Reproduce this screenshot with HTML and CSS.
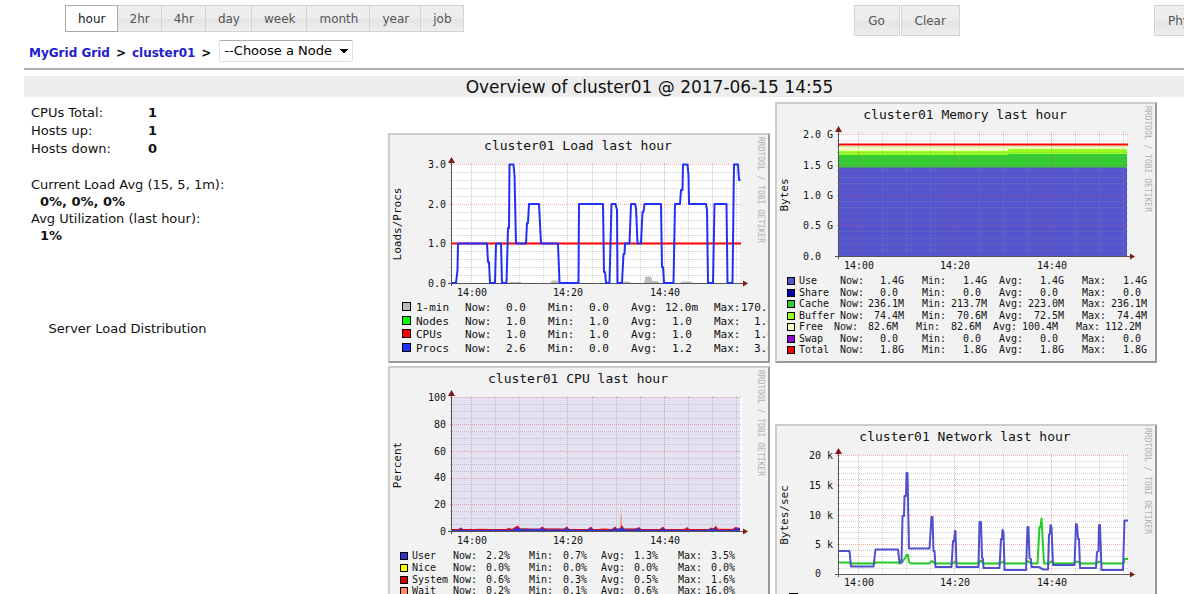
FILE: index.html
```html
<!DOCTYPE html>
<html lang="en">
<head>
<meta charset="utf-8">
<title>cluster01 overview</title>
<link rel="stylesheet" href="styles.css">
</head>
<body>
<header class="toolbar">
  <div class="tabs">
    <button type="button" class="tab active">hour</button>
    <button type="button" class="tab">2hr</button>
    <button type="button" class="tab">4hr</button>
    <button type="button" class="tab">day</button>
    <button type="button" class="tab">week</button>
    <button type="button" class="tab">month</button>
    <button type="button" class="tab">year</button>
    <button type="button" class="tab">job</button>
  </div>
  <div class="actions">
    <button type="button" class="btn">Go</button>
    <button type="button" class="btn">Clear</button>
  </div>
  <button type="button" class="btn">Physical View</button>
</header>
<nav class="crumbs">
  <a href="#">MyGrid Grid</a><span>&gt;</span><a href="#">cluster01</a><span>&gt;</span>
  <select class="node" aria-label="Node"><option>--Choose a Node</option></select>
</nav>
<main class="page">
  <h1 class="title">Overview of cluster01 @ 2017-06-15 14:55</h1>
  <div class="content">
    <section class="summary">
      <dl class="counts">
        <dt>CPUs Total:</dt><dd>1</dd>
        <dt>Hosts up:</dt><dd>1</dd>
        <dt>Hosts down:</dt><dd>0</dd>
      </dl>
      <dl class="loads">
        <dt>Current Load Avg (15, 5, 1m):</dt><dd>0%, 0%, 0%</dd>
        <dt>Avg Utilization (last hour):</dt><dd>1%</dd>
      </dl>
      <p class="distribution">Server Load Distribution</p>
    </section>
    <section class="charts">
      <div class="chart">
        <svg width="378" height="226" role="img" aria-label="cluster01 Load last hour">
          <rect class="canvas" x="62" y="29" width="288" height="119"/>
          <path class="minor" d="M60 140.5H352M60 132.5H352M60 124.5H352M60 116.5H352M60 100.5H352M60 93.5H352M60 85.5H352M60 77.5H352M60 61.5H352M60 53.5H352M60 45.5H352M60 37.5H352M105.5 28V150M129.5 28V150M153.5 28V150M202.5 28V150M226.5 28V150M250.5 28V150M298.5 28V150M322.5 28V150M346.5 28V150"/>
          <path class="major" d="M60 108.5H352M60 69.5H352M60 29.5H352M81.5 28V150M177.5 28V150M274.5 28V150"/>
          <path fill="#bbb" d="M119 148V147H131V148ZM160 148L162 145.500H167L169 148ZM232 148L234 146.500H239L242 148ZM254 148L255.500 141.500H261L262.500 146H267L270 148ZM290 148L292 146.500H300L304 148Z"/>
          <path class="axis" d="M58 148.500H356M61.500 26V151"/>
          <path class="arrow" d="M61.500 22L65 28H58ZM358 148.500L353 145.500V151.500Z"/>
          <path class="line" stroke="#f00" d="M62 108.500H351"/>
          <path class="line" stroke="#2030f4" d="M62 148H66L67.500 135 68 108.500H97L98 127H99L100 148H105L106 108.500H111L112 148H116.500L118 93H119L119.500 29.500H123.500L124.500 40 126 108.500H136L137 88H138L139 69H149L151 108.500H168L169.500 148H188.500L189 69H213L214 137H215L216 148H219.500L221.500 69H225.500L227 75 227.500 148H232L233.500 119H234.500L235 108.500H239.500L241 69H245L246 73 247.500 108.500H251L252.500 77H253.500L254.500 69H271L272 132H273L274 148H283.500L285 69H290L291 55H292.500L293 29.500H297.500L298.500 40 299 69H316L317 75 318 148H323L324.500 69H336.500L337.500 148H342.500L344 29.500H348L349 45H350.500"/>
          <text class="name" x="188" y="15">cluster01 Load last hour</text>
          <text class="unit" transform="translate(11 89) rotate(-90)">Loads/Procs</text>
          <text class="mark" transform="translate(368 2) rotate(90)">RRDTOOL / TOBI OETIKER</text>
          <g class="end"><text x="56" y="33">3.0</text><text x="56" y="73">2.0</text><text x="56" y="112">1.0</text><text x="56" y="152">0.0</text></g>
          <g class="mid"><text x="82" y="161">14:00</text><text x="178" y="161">14:20</text><text x="275" y="161">14:40</text></g>
          <g class="swatch">
            <rect x="12.5" y="167.500" width="8" height="8" fill="#bbb"/><rect x="12.5" y="181.500" width="8" height="8" fill="#0f0"/><rect x="12.5" y="194.500" width="8" height="8" fill="#f00"/><rect x="12.5" y="208.500" width="8" height="8" fill="#2030f4"/>
          </g>
          <g class="big">
            <text y="176"><tspan x="26">1-min</tspan><tspan x="75">Now:</tspan><tspan x="116">0.0</tspan><tspan x="158">Min:</tspan><tspan x="199">0.0</tspan><tspan x="241">Avg:</tspan><tspan x="275">12.0m</tspan><tspan x="324">Max:</tspan><tspan x="351">170.0m</tspan></text>
            <text y="190"><tspan x="26">Nodes</tspan><tspan x="75">Now:</tspan><tspan x="116">1.0</tspan><tspan x="158">Min:</tspan><tspan x="199">1.0</tspan><tspan x="241">Avg:</tspan><tspan x="282">1.0</tspan><tspan x="324">Max:</tspan><tspan x="364">1.0</tspan></text>
            <text y="203"><tspan x="26">CPUs</tspan><tspan x="75">Now:</tspan><tspan x="116">1.0</tspan><tspan x="158">Min:</tspan><tspan x="199">1.0</tspan><tspan x="241">Avg:</tspan><tspan x="282">1.0</tspan><tspan x="324">Max:</tspan><tspan x="364">1.0</tspan></text>
            <text y="217"><tspan x="26">Procs</tspan><tspan x="75">Now:</tspan><tspan x="116">2.6</tspan><tspan x="158">Min:</tspan><tspan x="199">0.0</tspan><tspan x="241">Avg:</tspan><tspan x="282">1.2</tspan><tspan x="324">Max:</tspan><tspan x="364">3.0</tspan></text>
          </g>
        </svg>
      </div>
      <div class="chart">
        <svg width="378" height="257" role="img" aria-label="cluster01 Memory last hour">
          <rect class="canvas" x="62" y="30" width="288" height="122"/>
          <path fill="#f0ffbe" d="M62 41H350V48H62Z"/>
          <path fill="#9f2" d="M62 47H230L232 45H350V52H62Z"/>
          <path fill="#3c3" d="M62 51H230L232 50H350V64H62Z"/>
          <path fill="#5555cf" d="M62 63.500H350V152H62Z"/>
          <path class="minor" d="M60 146.500H352M60 140.500H352M60 134.500H352M60 127.500H352M60 115.500H352M60 109.500H352M60 103.500H352M60 97.500H352M60 85.500H352M60 79.500H352M60 73.500H352M60 66.500H352M60 54.500H352M60 48.500H352M60 42.500H352M60 36.500H352M105.500 28V154M129.500 28V154M153.500 28V154M202.500 28V154M226.500 28V154M250.500 28V154M298.500 28V154M322.500 28V154M346.500 28V154"/>
          <path class="major" d="M60 121.500H352M60 91.500H352M60 61.500H352M60 30.500H352M81.500 28V154M177.500 28V154M274.500 28V154"/>
          <path class="line" stroke="#f00" d="M62 40.500H351"/>
          <path class="axis" d="M58 152.500H356M61.500 26V155"/>
          <path class="arrow" d="M61.500 22L65 28H58ZM358 152.500L353 149.500V155.500Z"/>
          <text class="name" x="188" y="15">cluster01 Memory last hour</text>
          <text class="unit" transform="translate(11 91) rotate(-90)">Bytes</text>
          <text class="mark" transform="translate(368 2) rotate(90)">RRDTOOL / TOBI OETIKER</text>
          <g class="end"><text x="56" y="34">2.0 G</text><text x="56" y="65">1.5 G</text><text x="56" y="95">1.0 G</text><text x="56" y="125">0.5 G</text><text x="44" y="156">0.0</text></g>
          <g class="mid"><text x="82" y="165">14:00</text><text x="178" y="165">14:20</text><text x="275" y="165">14:40</text></g>
          <g class="swatch">
            <rect x="10.500" y="173.500" width="7" height="7" fill="#5555cf"/><rect x="10.500" y="185.500" width="7" height="7" fill="#0000a8"/><rect x="10.500" y="196.500" width="7" height="7" fill="#3c3"/><rect x="10.500" y="208.500" width="7" height="7" fill="#9f2"/><rect x="10.500" y="219.500" width="7" height="7" fill="#f0ffbe"/><rect x="10.500" y="231.500" width="7" height="7" fill="#9400d3"/><rect x="10.500" y="242.500" width="7" height="7" fill="#f00"/>
          </g>
          <g>
            <text x="22" y="180">Use</text><text x="22" y="192">Share</text><text x="22" y="203">Cache</text><text x="22" y="215">Buffer</text><text x="22" y="226">Free</text><text x="22" y="238">Swap</text><text x="22" y="249">Total</text>
          </g>
          <g class="end">
            <text y="180"><tspan x="87">Now:</tspan><tspan x="127">1.4G</tspan><tspan x="169">Min:</tspan><tspan x="210">1.4G</tspan><tspan x="246">Avg:</tspan><tspan x="287">1.4G</tspan><tspan x="329">Max:</tspan><tspan x="370">1.4G</tspan></text>
            <text y="192"><tspan x="87">Now:</tspan><tspan x="121">0.0</tspan><tspan x="169">Min:</tspan><tspan x="204">0.0</tspan><tspan x="246">Avg:</tspan><tspan x="281">0.0</tspan><tspan x="329">Max:</tspan><tspan x="364">0.0</tspan></text>
            <text y="203"><tspan x="87">Now:</tspan><tspan x="127">236.1M</tspan><tspan x="169">Min:</tspan><tspan x="210">213.7M</tspan><tspan x="246">Avg:</tspan><tspan x="287">223.0M</tspan><tspan x="329">Max:</tspan><tspan x="370">236.1M</tspan></text>
            <text y="215"><tspan x="87">Now:</tspan><tspan x="127">74.4M</tspan><tspan x="169">Min:</tspan><tspan x="210">70.6M</tspan><tspan x="246">Avg:</tspan><tspan x="287">72.5M</tspan><tspan x="329">Max:</tspan><tspan x="370">74.4M</tspan></text>
            <text y="226"><tspan x="81">Now:</tspan><tspan x="121">82.6M</tspan><tspan x="163">Min:</tspan><tspan x="204">82.6M</tspan><tspan x="240">Avg:</tspan><tspan x="281">100.4M</tspan><tspan x="323">Max:</tspan><tspan x="364">112.2M</tspan></text>
            <text y="238"><tspan x="87">Now:</tspan><tspan x="121">0.0</tspan><tspan x="169">Min:</tspan><tspan x="204">0.0</tspan><tspan x="246">Avg:</tspan><tspan x="281">0.0</tspan><tspan x="329">Max:</tspan><tspan x="364">0.0</tspan></text>
            <text y="249"><tspan x="87">Now:</tspan><tspan x="127">1.8G</tspan><tspan x="169">Min:</tspan><tspan x="210">1.8G</tspan><tspan x="246">Avg:</tspan><tspan x="287">1.8G</tspan><tspan x="329">Max:</tspan><tspan x="370">1.8G</tspan></text>
          </g>
        </svg>
      </div>
      <div class="chart">
        <svg width="378" height="257" role="img" aria-label="cluster01 CPU last hour">
          <rect class="canvas" x="62" y="29" width="290" height="134"/>
          <rect fill="#e2e2f2" x="62" y="29" width="288" height="134"/>
          <path class="minor" d="M60 156.500H352M60 150.500H352M60 143.500H352M60 130.500H352M60 123.500H352M60 116.500H352M60 103.500H352M60 96.500H352M60 90.500H352M60 76.500H352M60 70.500H352M60 63.500H352M60 50.500H352M60 43.500H352M60 36.500H352M105.500 28V165M129.500 28V165M153.500 28V165M202.500 28V165M226.500 28V165M250.500 28V165M298.500 28V165M322.500 28V165M346.500 28V165"/>
          <path class="major" d="M60 136.500H352M60 110.500H352M60 83.500H352M60 56.500H352M60 29.500H352M81.500 28V165M177.500 28V165M274.500 28V165"/>
          <path fill="#ff8a60" d="M62 163V161.500H85L88 160.500H96L99 161.500H116L119 159.500 122 161 128 158.500 130 160H137L141 161H150L152 159.500 155 160.500H168L170 161.500H174L177 159.500 180 161.500H197L201 159.500 204 161.500H208L211 160H216L219 161H222L225 159 228 160.500H230L231 140 232 158 234 160.500H245L249 159.500 252 161H270L273 159 276 161H293L297 159.500 301 161H319L322 159.500 324 160.500 326 157.500 328 160.500H342L345 159.500 350 160V163Z"/>
          <path fill="#c8102e" d="M62 163V161H68L71 159.500 73 161H116L119 160 122 161 124 159.500 128 157.500 130 160.500H150L152 158.500 155 160.500H174L177 158.500 179 161H198L201 158.500 203 161H222L225 158.500 227 160.500H230L232 157 234 160.500H246L249 159 251 161H270L273 158.500 275 161H295L297 159 299 161H319L321 159.500 323 160.500 326 158 328 161H343L345 159 350 160V163Z"/>
          <path fill="#3333cd" d="M62 163V162H69L71 160.500 73 162H122L128 159.500 131 161H150L152 160 155 161.500H174L177 160 180 162H198L201 160 204 162H222L225 160 228 161.500 232 159 235 161.500H246L249 160 252 162H270L273 160 276 162H319L321 160.500 326 161 328 162H343L346 160 350 161V163Z"/>
          <path class="axis" d="M58 163.500H356M61.500 26V166"/>
          <path class="arrow" d="M61.500 22L65 28H58ZM358 163.500L353 160.500V166.500Z"/>
          <text class="name" x="188" y="15">cluster01 CPU last hour</text>
          <text class="unit" transform="translate(11 97) rotate(-90)">Percent</text>
          <text class="mark" transform="translate(368 2) rotate(90)">RRDTOOL / TOBI OETIKER</text>
          <g class="end"><text x="56" y="33">100</text><text x="56" y="60">80</text><text x="56" y="87">60</text><text x="56" y="113">40</text><text x="56" y="140">20</text><text x="56" y="167">0</text></g>
          <g class="mid"><text x="82" y="176">14:00</text><text x="178" y="176">14:20</text><text x="275" y="176">14:40</text></g>
          <g class="swatch">
            <rect x="10.500" y="184.500" width="7" height="7" fill="#3333cd"/><rect x="10.500" y="196.500" width="7" height="7" fill="#ff0"/><rect x="10.500" y="208.500" width="7" height="7" fill="#d00000"/><rect x="10.500" y="219.500" width="7" height="7" fill="#ff8a60"/>
          </g>
          <g>
            <text x="22" y="191">User</text><text x="22" y="203">Nice</text><text x="22" y="215">System</text><text x="22" y="226">Wait</text>
          </g>
          <g class="end">
            <text y="191"><tspan x="87">Now:</tspan><tspan x="120">2.2%</tspan><tspan x="163">Min:</tspan><tspan x="197">0.7%</tspan><tspan x="235">Avg:</tspan><tspan x="268">1.3%</tspan><tspan x="312">Max:</tspan><tspan x="345">3.5%</tspan></text>
            <text y="203"><tspan x="87">Now:</tspan><tspan x="120">0.0%</tspan><tspan x="163">Min:</tspan><tspan x="197">0.0%</tspan><tspan x="235">Avg:</tspan><tspan x="268">0.0%</tspan><tspan x="312">Max:</tspan><tspan x="345">0.0%</tspan></text>
            <text y="215"><tspan x="87">Now:</tspan><tspan x="120">0.6%</tspan><tspan x="163">Min:</tspan><tspan x="197">0.3%</tspan><tspan x="235">Avg:</tspan><tspan x="268">0.5%</tspan><tspan x="312">Max:</tspan><tspan x="345">1.6%</tspan></text>
            <text y="226"><tspan x="87">Now:</tspan><tspan x="120">0.2%</tspan><tspan x="163">Min:</tspan><tspan x="197">0.1%</tspan><tspan x="235">Avg:</tspan><tspan x="268">0.6%</tspan><tspan x="312">Max:</tspan><tspan x="345">16.0%</tspan></text>
          </g>
        </svg>
      </div>
      <div class="chart">
        <svg width="378" height="199" role="img" aria-label="cluster01 Network last hour">
          <rect class="canvas" x="62" y="29" width="288" height="119"/>
          <path class="minor" d="M60 142.500H352M60 136.500H352M60 130.500H352M60 124.500H352M60 112.500H352M60 106.500H352M60 101.500H352M60 95.500H352M60 83.500H352M60 77.500H352M60 71.500H352M60 65.500H352M60 53.500H352M60 47.500H352M60 41.500H352M60 35.500H352M105.500 28V150M129.500 28V150M153.500 28V150M202.500 28V150M226.500 28V150M250.500 28V150M298.500 28V150M322.500 28V150M346.500 28V150"/>
          <path class="major" d="M60 118.500H352M60 89.500H352M60 59.500H352M60 29.500H352M81.500 28V150M177.500 28V150M274.500 28V150"/>
          <path class="axis" d="M58 148.500H356M61.500 26V151"/>
          <path class="arrow" d="M61.500 22L65 28H58ZM358 148.500L353 145.500V151.500Z"/>
          <path class="line" stroke="#2c2" d="M62 136.500H72L74 137.500H97L99 136.500H121L123 137.500 126 135 128 132 129.500 129H131L132 136 134 137.500H152L155 135 158 137.500H175L178 136 180 137.500H201L204 134.500 206 137.500H223L226 135.500 228 137.500H249L251 135 254 137.500H260.500L262.500 101H263.500L264.500 92.500 265.500 110 267 137.500H272L274 135.500 277 137.500H297L299 135.500 302 136 304 137.500H319L322 135.500 325 137.500H346.500L347.500 133H351"/>
          <path class="line" stroke="#5050cc" d="M62 125H72.500L74 140.500H96.500L98.500 123.500H121L122.500 136.500H124.500L125.500 90H127L127.500 70H129L129.500 47H130.500L132 122.500H152.500L154.500 91H155.500L156.500 125H157.500L158.500 141H174.500L176 115H177L178 105H178.500L179.500 141H201.500L202.500 96H204L205 131.500 206 133 206.500 142H222.500L224 113H225L225.500 104 226.500 106 227.500 144H249L250.500 101H251.500L252.500 132 254 133 254.500 141H261.500L266.500 143.500H271L272 109 273 107 273.500 99 274.500 101 276 139H297.500L299 98 300 99 301 113H302L303 142H319L320 126 321.500 125 322 99H323L324.500 144H346L347.500 94.500H351"/>
          <text class="name" x="188" y="15">cluster01 Network last hour</text>
          <text class="unit" transform="translate(11 89) rotate(-90)">Bytes/sec</text>
          <text class="mark" transform="translate(368 2) rotate(90)">RRDTOOL / TOBI OETIKER</text>
          <g class="end"><text x="56" y="33">20 k</text><text x="56" y="63">15 k</text><text x="56" y="93">10 k</text><text x="56" y="122">5 k</text><text x="44" y="151">0</text></g>
          <g class="mid"><text x="82" y="160">14:00</text><text x="178" y="160">14:20</text><text x="275" y="160">14:40</text></g>
          <g class="swatch"><rect x="12.500" y="167.500" width="8" height="8" fill="#3c3"/></g>
        </svg>
      </div>
    </section>
  </div>
</main>
</body>
</html>
```
FILE: styles.css
```css
* { box-sizing: border-box; }
body {
  margin: 0;
  height: 100vh;
  overflow: hidden;
  background: #fff;
  color: #111;
  font: 13px/18px "DejaVu Sans", sans-serif;
}
.toolbar {
  display: flex;
  align-items: flex-start;
  justify-content: flex-start;
  height: 36px;
  padding: 5px 0 0 65px;
  overflow: hidden;
}
.tabs { display: flex; flex: none; }
.tab, .btn {
  flex: none;
  margin: 0;
  border: 1px solid #d3d3d3;
  background: linear-gradient(#eee, #ececec 50%, #e4e4e4 51%, #eee);
  color: #555;
  font: 12px/18px "DejaVu Sans", sans-serif;
  white-space: nowrap;
}
.tab {
  height: 27px;
  padding: 0 11px 0 12px;
  border-left-width: 0;
}
.tab.active {
  border: 1px solid #aaa;
  background: #fff;
  color: #212121;
}
.actions {
  display: flex;
  flex: none;
  gap: 1px;
  margin: 0 194px 0 390px;
}
.btn {
  min-width: 46px;
  height: 31px;
  padding: 0 13px;
}
.crumbs {
  display: flex;
  align-items: center;
  gap: 6px;
  height: 32px;
  margin-left: 29px;
  padding-top: 2px;
  font-size: 12px;
  font-weight: bold;
}
.crumbs a { color: #2020cc; text-decoration: none; }
.node {
  height: 22px;
  margin: 0 0 4px 2px;
  padding: 0 20px 0 4px;
  appearance: none;
  border: 1px solid #dde0ea;
  border-top-color: #abadb3;
  border-radius: 2px;
  background:
    linear-gradient(to bottom right, #000 50%, transparent 51%) right 4px center / 4px 4px no-repeat,
    linear-gradient(to bottom left, #000 50%, transparent 51%) right 8px center / 4px 4px no-repeat,
    #fff;
  color: #000;
  font: 13px/18px "DejaVu Sans", sans-serif;
}
.page {
  margin-left: 24px;
  padding-top: 6px;
  border-top: 2px solid #b0b0b0;
}
.title {
  margin: 0 0 5px;
  padding: 1px 0 0 91px;
  background: #ededed;
  font-size: 17px;
  font-weight: normal;
  line-height: 20px;
  text-align: center;
}
.content { display: flex; align-items: flex-start; }
.summary { flex: 0 0 364px; padding: 2px 0 0 7px; }
.counts, .loads { margin: 0; }
.counts {
  display: grid;
  grid-template-columns: 117px 1fr;
}
.counts dd, .loads dd { margin: 0; font-weight: bold; }
.loads { margin-top: 18px; }
.loads dd { padding-left: 9px; line-height: 16px; }
.distribution { width: 193px; margin: 76px 0 0; text-align: center; }
.charts {
  display: grid;
  grid-template-columns: repeat(2, max-content);
  align-items: end;
  gap: 3px 5px;
}
.chart {
  border: 2px solid;
  border-color: #ccc #999 #999 #ccc;
  background: #f2f2f2;
}
.chart svg { display: block; overflow: hidden; }
.chart text {
  fill: #111;
  font: 10px "DejaVu Sans Mono", monospace;
}
.chart .name { font-size: 13px; text-anchor: middle; }
.chart .unit { font-size: 11px; text-anchor: middle; }
.chart .mark { font-size: 8px; fill: #b0b0b0; }
.chart .big text { font-size: 11px; }
.end text { text-anchor: end; }
.mid text { text-anchor: middle; }
.canvas { fill: #fff; }
.minor, .major, .axis, .line { fill: none; }
.minor { stroke: #8f8f8f; stroke-opacity: .4; stroke-dasharray: 1 1; }
.major { stroke: #e44; stroke-opacity: .45; stroke-dasharray: 1 1; }
.axis { stroke: #555; }
.arrow { fill: #801818; }
.line { stroke-width: 2; stroke-linejoin: round; }
.swatch rect { stroke: #000; }
```
